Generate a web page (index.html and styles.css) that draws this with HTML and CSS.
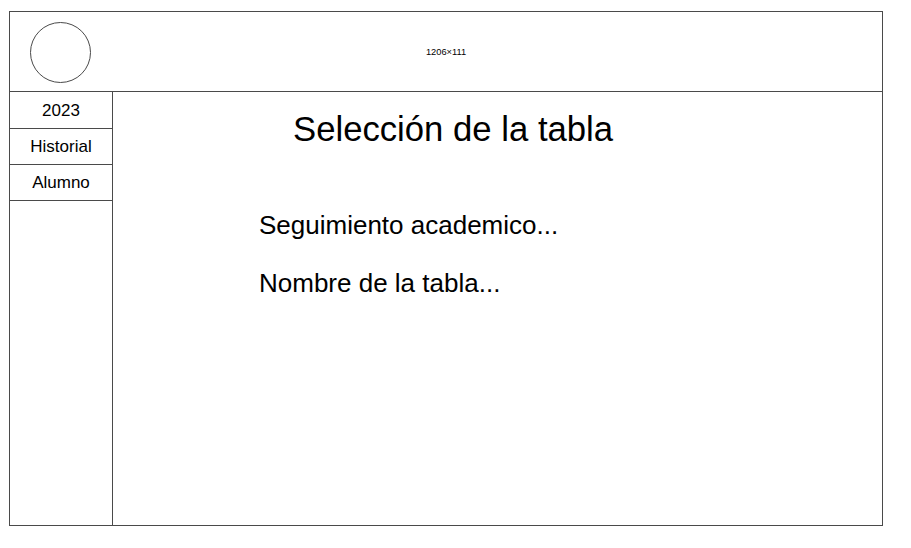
FILE: index.html
```html
<!DOCTYPE html>
<html lang="es">
<head>
<meta charset="utf-8">
<title>Selección de la tabla</title>
<link rel="stylesheet" href="styles.css">
</head>
<body>
<div class="frame">
  <header class="header">
    <div class="logo-cell"><div class="logo"></div></div>
    <div class="size-label">1206×111</div>
    <div class="spacer"></div>
  </header>
  <div class="body">
    <nav class="sidebar">
      <div class="item first">2023</div>
      <div class="item">Historial</div>
      <div class="item">Alumno</div>
    </nav>
    <main class="main">
      <h1 class="title">Selección de la tabla</h1>
      <p class="field first-field">Seguimiento academico...</p>
      <p class="field">Nombre de la tabla...</p>
    </main>
  </div>
</div>
</body>
</html>
```

FILE: styles.css
```css
* { box-sizing: border-box; }
html, body { margin: 0; padding: 0; background: #fff; }
body { font-family: "Liberation Sans", Arial, sans-serif; color: #000; }

.frame {
  margin: 11px 0 0 9px;
  width: 874px;
  height: 515px;
  border: 1px solid #4a4a4a;
  display: flex;
  flex-direction: column;
}

.header {
  height: 80px;
  border-bottom: 1px solid #4a4a4a;
  display: grid;
  grid-template-columns: 1fr auto 1fr;
  align-items: center;
  flex: none;
}
.logo-cell { padding: 2px 0 0 20px; display: flex; align-items: center; }
.logo {
  width: 61px;
  height: 61px;
  border: 1px solid #4a4a4a;
  border-radius: 50%;
}
.size-label { font-size: 9.3px; line-height: 11px; padding-top: 1px; }

.body { flex: 1; display: flex; min-height: 0; }

.sidebar {
  width: 103px;
  border-right: 1px solid #4a4a4a;
  flex: none;
  display: flex;
  flex-direction: column;
}
.item {
  height: 36px;
  border-bottom: 1px solid #4a4a4a;
  display: flex;
  align-items: center;
  justify-content: center;
  font-size: 17px;
  padding-top: 1px;
}
.item.first { height: 37px; }

.main { flex: 1; }
.title {
  margin: 17px 0 0 180px;
  font-size: 34.7px;
  line-height: 40px;
  font-weight: normal;
}
.field {
  margin: 28px 0 0 146px;
  font-size: 26px;
  line-height: 30px;
}
.first-field { margin-top: 61px; }
```
